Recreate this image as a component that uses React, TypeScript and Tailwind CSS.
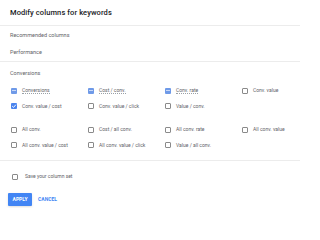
import React from "react";

type Col = { label: string; state: "on" | "check" | "off"; underline?: boolean };

const groups: Col[][] = [
  [
    { label: "Conversions", state: "on", underline: true },
    { label: "Cost / conv.", state: "on", underline: true },
    { label: "Conv. rate", state: "on", underline: true },
    { label: "Conv. value", state: "off" },
    { label: "Conv. value / cost", state: "check" },
    { label: "Conv. value / click", state: "off" },
    { label: "Value / conv.", state: "off" },
  ],
  [
    { label: "All conv.", state: "off" },
    { label: "Cost / all conv.", state: "off" },
    { label: "All conv. rate", state: "off" },
    { label: "All conv. value", state: "off" },
    { label: "All conv. value / cost", state: "off" },
    { label: "All conv. value / click", state: "off" },
    { label: "Value / all conv.", state: "off" },
  ],
];

const Box = ({ state }: { state: Col["state"] }) => {
  if (state === "off") {
    return <span className="w-[6px] h-[6px] border border-[#8a8a8a] rounded-[1px] shrink-0" />;
  }
  return (
    <span
      className={`w-[6px] h-[6px] rounded-[1px] shrink-0 flex items-center justify-center ${
        state === "on" ? "bg-[#6f9ae8]" : "bg-[#4a84ee]"
      }`}
    >
      {state === "check" ? (
        <svg viewBox="0 0 10 10" className="w-[6px] h-[6px]">
          <path d="M2 5.2 L4.2 7.3 L8.2 2.8" fill="none" stroke="white" strokeWidth="1.6" />
        </svg>
      ) : (
        <span className="w-[4px] h-[1px] bg-[#c9d9f8]" />
      )}
    </span>
  );
};

export default function App() {
  return (
    <div className="w-[300px] h-[208px] bg-white overflow-hidden text-[#3c4043]" style={{ fontFamily: "Roboto, 'Liberation Sans', sans-serif" }}>
      {/* Header */}
      <div className="h-[25px] pl-[10px] flex items-center">
        <h1 className="text-[7.5px] font-medium text-[#202124] tracking-[0.1px]">Modify columns for keywords</h1>
      </div>
      <div className="h-px bg-[#ececec]" />

      <div className="pl-[10px] text-[5.5px] text-[#5f6368]">
        <div className="h-[18px] flex items-center">Recommended columns</div>
        <div className="h-[17px] flex items-center">Performance</div>
      </div>
      <div className="h-px bg-[#ececec]" />

      <div className="pl-[10px] text-[5.5px] text-[#5f6368] h-[21px] flex items-center pt-[1px]">Conversions</div>

      <div className="pl-[11px]">
        {groups.map((g, gi) => (
          <div key={gi} className={`grid grid-cols-[77px_77px_77px_77px] ${gi === 0 ? "" : "mt-[8px]"}`}>
            {g.map((c) => (
              <div key={c.label} className="h-[15.5px] flex items-center gap-[5px]">
                <Box state={c.state} />
                <span
                  className={`text-[5px] text-[#5f6368] whitespace-nowrap ${
                    c.underline ? "border-b border-dotted border-[#9aa0a6] leading-[6px]" : ""
                  }`}
                >
                  {c.label}
                </span>
              </div>
            ))}
          </div>
        ))}
      </div>

      <div className="h-px bg-[#ececec] mt-[7px]" />

      {/* Save */}
      <div className="pl-[12px] h-[32px] flex items-center gap-[7px]">
        <Box state="off" />
        <span className="text-[5px] text-[#5f6368]">Save your column set</span>
      </div>

      {/* Actions */}
      <div className="pl-[8px] flex items-center gap-[6px]">
        <button className="w-[24px] h-[13px] bg-[#4285f4] text-white text-[5px] font-bold rounded-[1px] shadow-sm">APPLY</button>
        <button className="text-[5px] font-bold text-[#4285f4]">CANCEL</button>
      </div>
    </div>
  );
}
